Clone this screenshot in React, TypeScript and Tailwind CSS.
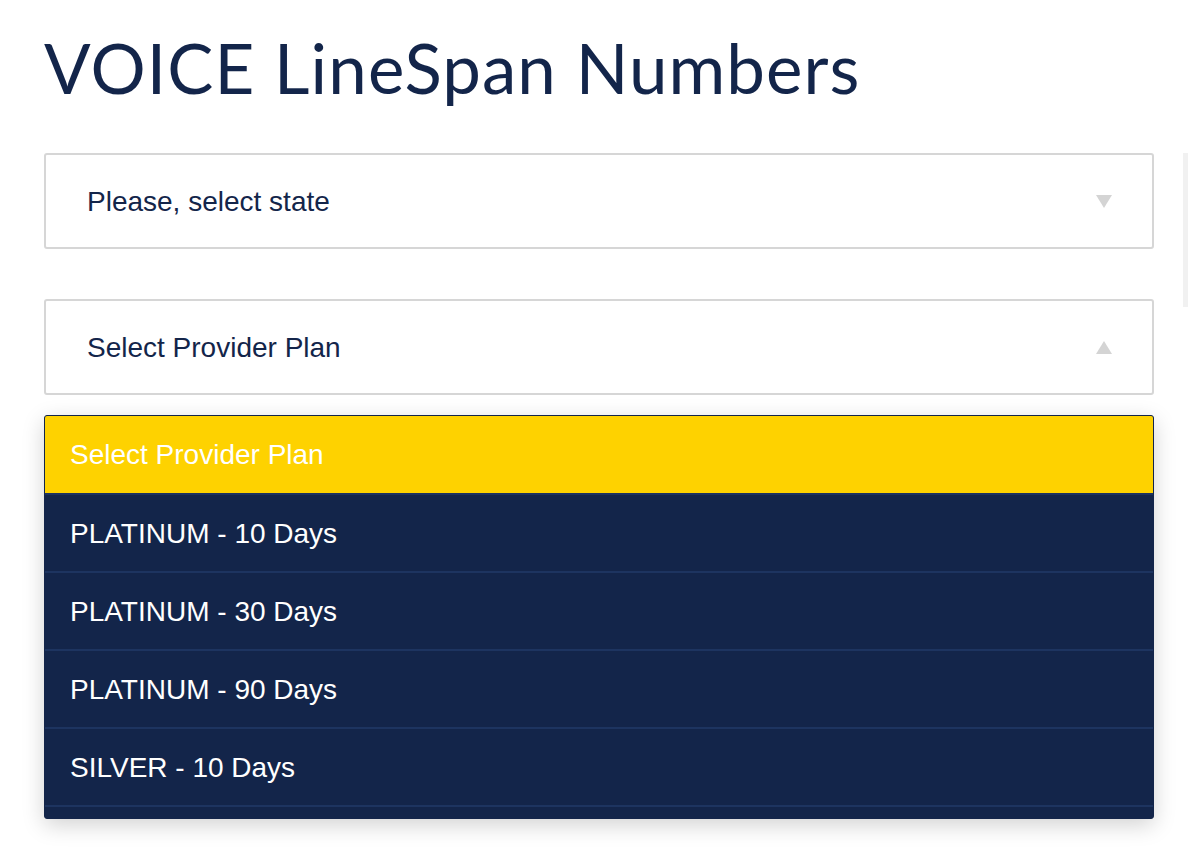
import React from "react";

const rows = ["PLATINUM - 10 Days", "PLATINUM - 30 Days", "PLATINUM - 90 Days", "SILVER - 10 Days"];

export default function App() {
  return (
    <div className="relative min-h-[852px] w-[1188px] bg-white overflow-hidden" style={{ fontFamily: '"Liberation Sans", Arial, sans-serif' }}>
      <div className="absolute right-0 top-[153px] h-[154px] w-[5px] bg-[#f1f1f1]" />
      <div className="pl-[44px] pr-[34px]">
        <h1 className="pt-[28px] text-[69px] leading-[80px] text-[#13254a] tracking-[1.1px]" style={{ fontFamily: 'Lato, "Noto Sans", sans-serif' }}>
          VOICE LineSpan Numbers
        </h1>
        <div className="mt-[45px] flex h-[96px] items-center justify-between rounded-[3px] border-2 border-[#d6d6d6] pl-[41px] pr-[40px]">
          <span className="pt-[1px] text-[28px] text-[#13254a]">Please, select state</span>
          <svg width="16" height="13" viewBox="0 0 16 13"><polygon points="0,0 16,0 8,13" fill="#d4d4d4" /></svg>
        </div>
        <div className="mt-[50px] flex h-[96px] items-center justify-between rounded-[3px] border-2 border-[#d6d6d6] pl-[41px] pr-[40px]">
          <span className="pt-[1px] text-[28px] text-[#13254a]">Select Provider Plan</span>
          <svg width="16" height="13" viewBox="0 0 16 13"><polygon points="0,13 16,13 8,0" fill="#d4d4d4" /></svg>
        </div>
        <div className="mt-[20px] h-[404px] overflow-hidden rounded-[3px] border border-[#13254a] bg-[#13254a] shadow-[0_6px_22px_rgba(0,0,0,0.18)]">
          <div className="flex h-[79px] items-center bg-[#fed200] pl-[25px] pt-[1px] text-[28px] text-white border-b-2 border-[#1c3260]">
            Select Provider Plan
          </div>
          {rows.map((r) => (
            <div key={r} className="flex h-[78px] items-center border-b-2 border-[#1d3460] pl-[25px] pt-[1px] text-[28px] text-white">
              {r}
            </div>
          ))}
          <div className="h-[78px]" />
        </div>
      </div>
    </div>
  );
}
